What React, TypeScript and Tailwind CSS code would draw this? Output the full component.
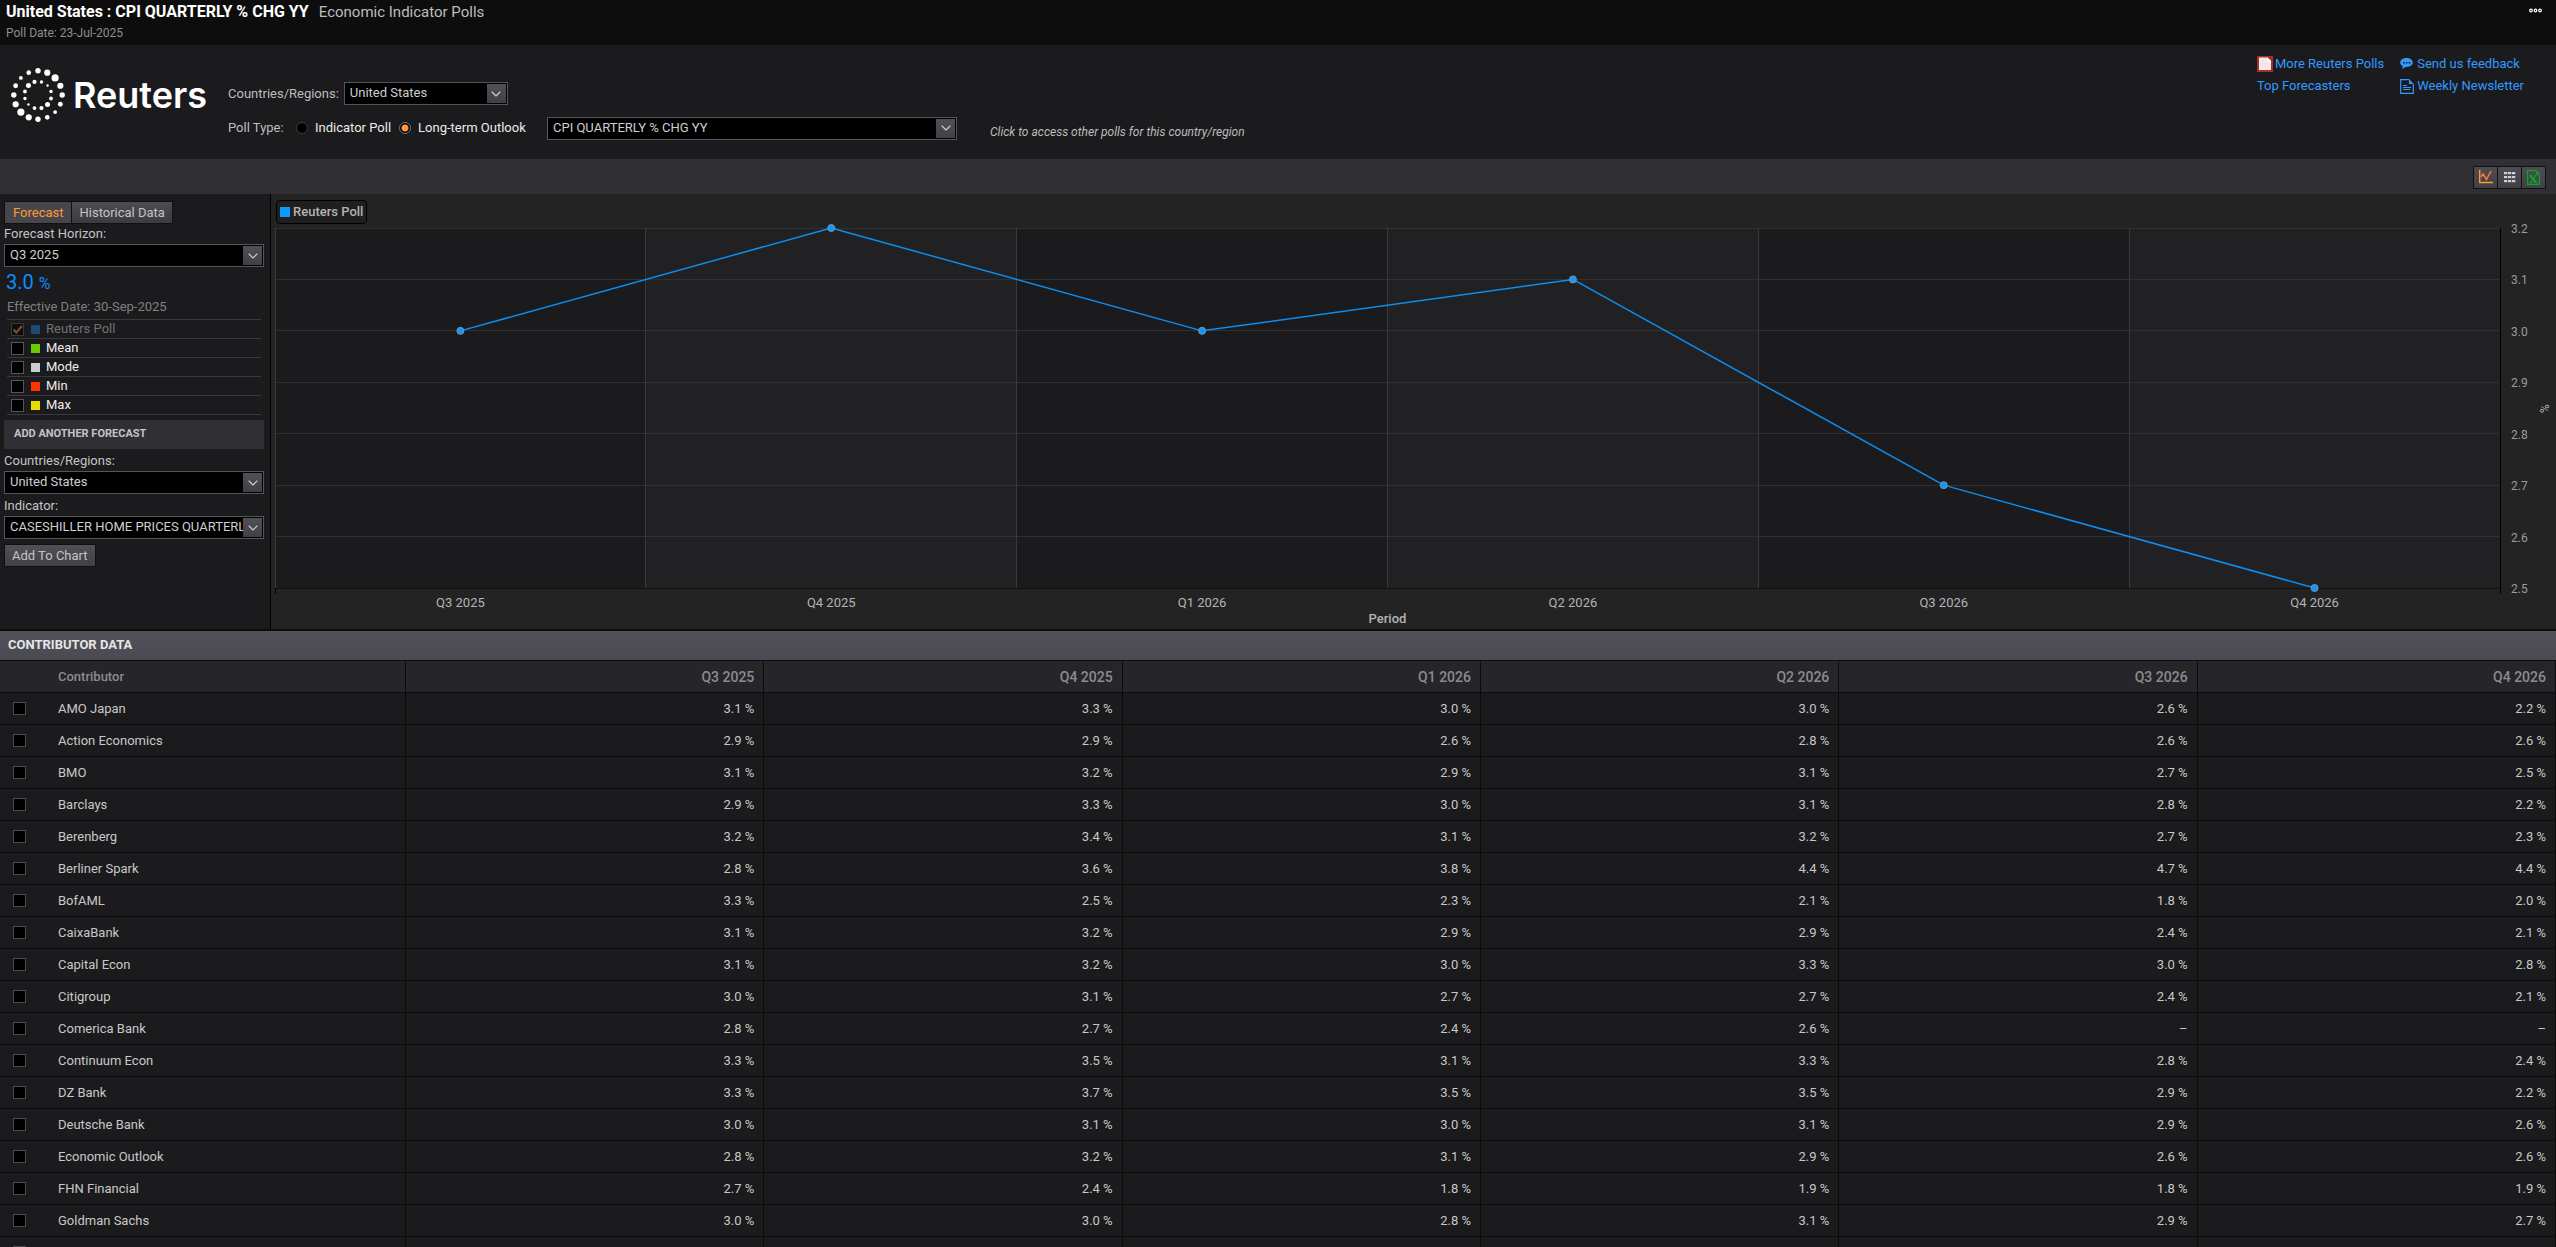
import React from "react";
import {ChevronDown} from "lucide-react";

const periods = ["Q3 2025", "Q4 2025", "Q1 2026", "Q2 2026", "Q3 2026", "Q4 2026"];
const pollValues = [3.0, 3.2, 3.0, 3.1, 2.7, 2.5];
const ticks = [3.2, 3.1, 3.0, 2.9, 2.8, 2.7, 2.6, 2.5];

const contributors: [string, string[]][] = [
    ["AMO Japan", ["3.1", "3.3", "3.0", "3.0", "2.6", "2.2"]],
    ["Action Economics", ["2.9", "2.9", "2.6", "2.8", "2.6", "2.6"]],
    ["BMO", ["3.1", "3.2", "2.9", "3.1", "2.7", "2.5"]],
    ["Barclays", ["2.9", "3.3", "3.0", "3.1", "2.8", "2.2"]],
    ["Berenberg", ["3.2", "3.4", "3.1", "3.2", "2.7", "2.3"]],
    ["Berliner Spark", ["2.8", "3.6", "3.8", "4.4", "4.7", "4.4"]],
    ["BofAML", ["3.3", "2.5", "2.3", "2.1", "1.8", "2.0"]],
    ["CaixaBank", ["3.1", "3.2", "2.9", "2.9", "2.4", "2.1"]],
    ["Capital Econ", ["3.1", "3.2", "3.0", "3.3", "3.0", "2.8"]],
    ["Citigroup", ["3.0", "3.1", "2.7", "2.7", "2.4", "2.1"]],
    ["Comerica Bank", ["2.8", "2.7", "2.4", "2.6", "", ""]],
    ["Continuum Econ", ["3.3", "3.5", "3.1", "3.3", "2.8", "2.4"]],
    ["DZ Bank", ["3.3", "3.7", "3.5", "3.5", "2.9", "2.2"]],
    ["Deutsche Bank", ["3.0", "3.1", "3.0", "3.1", "2.9", "2.6"]],
    ["Economic Outlook", ["2.8", "3.2", "3.1", "2.9", "2.6", "2.6"]],
    ["FHN Financial", ["2.7", "2.4", "1.8", "1.9", "1.8", "1.9"]],
    ["Goldman Sachs", ["3.0", "3.0", "2.8", "3.1", "2.9", "2.7"]],
];

const series = [
    {name: "Mean", color: "bg-[#66cc00]"},
    {name: "Mode", color: "bg-[#cccccc]"},
    {name: "Min", color: "bg-[#ff3300]"},
    {name: "Max", color: "bg-[#e6dc00]"},
];

// radius of every dot, clockwise from twelve o'clock
const outerDots = [2.7, 3.1, 3.6, 3.1, 2.7, 2.4, 1.9, 2.3, 2.7, 3.1, 3.6, 3.1, 2.7, 2.4, 1.9, 2.3];
const innerDots = [1.7, 1.2, 1.7, 1.9, 2.5, 2.1, 1.9, 1.2, 1.7, 1.9, 2.5, 2.1];

function ReutersLogo() {
    return (
        <div className="flex items-center gap-[7px]">
            <svg width="56" height="56" viewBox="-28 -28 56 56" fill="#fff" aria-hidden="true">
                {outerDots.map((r, i) => {
                    const a = i * Math.PI / 8;
                    return <circle key={i} cx={24.2 * Math.sin(a)} cy={-24.2 * Math.cos(a)} r={r}/>;
                })}
                {innerDots.map((r, i) => {
                    const a = (i + 0.5) * Math.PI / 6;
                    return <circle key={i} cx={13.5 * Math.sin(a)} cy={-13.5 * Math.cos(a)} r={r}/>;
                })}
            </svg>
            <span className="font-[Inter] font-semibold text-[36px] leading-10 text-white">Reuters</span>
        </div>
    );
}

function Select({id, value, className}: {id: string, value: string, className: string}) {
    return (
        <div className={"relative " + className}>
            <select id={id} className="appearance-none block w-full h-[23px] bg-black border border-[#56555c] pl-[5px] pr-5 pb-0.5 text-[13px] leading-5 text-[#cfcfcf]">
                <option>{value}</option>
            </select>
            <span className="absolute top-0.5 right-0.5 w-[19px] h-[19px] bg-linear-to-b from-[#515056] to-[#414045] flex items-center justify-center pointer-events-none">
                <ChevronDown className="w-4 h-4 text-[#cfcfd6]" strokeWidth={1.6}/>
            </span>
        </div>
    );
}

function TitleBar() {
    return (
        <header className="h-[45px] shrink-0 bg-[#0d0d0d] pl-1.5 pr-3.5 flex justify-between">
            <div>
                <h1 className="flex gap-2.5 text-base leading-6">
                    <span className="font-bold text-white">United States : CPI QUARTERLY % CHG YY</span>
                    <span className="text-[15px] text-[#bdbdbd]">Economic Indicator Polls</span>
                </h1>
                <p className="text-xs leading-[18px] text-[#8f8f8f]">Poll Date: 23-Jul-2025</p>
            </div>
            <button aria-label="More" className="h-5 flex items-center">
                <svg width="13" height="5" viewBox="0 0 13 5" fill="none" stroke="#fff" strokeWidth="1.2">
                    <circle cx="2" cy="2.5" r="1.3"/>
                    <circle cx="6.5" cy="2.5" r="1.3"/>
                    <circle cx="11" cy="2.5" r="1.3"/>
                </svg>
            </button>
        </header>
    );
}

function PollType({id, label, checked}: {id: string, label: string, checked?: boolean}) {
    return (
        <label htmlFor={id} className="flex items-center gap-[7px] text-[#ececec]">
            <input
                id={id}
                type="radio"
                name="pollType"
                defaultChecked={checked}
                className="appearance-none w-3 h-3 rounded-full bg-black border border-[#3a393f] checked:border-[#77767c] checked:bg-[radial-gradient(circle,#ff9933_0_3px,#000_4px)]"
            />
            {label}
        </label>
    );
}

function PollHeader() {
    return (
        <section className="h-[114px] shrink-0 bg-[#1b1b1d] pl-2.5 pr-8 flex">
            <div className="w-[218px] pt-[22px] shrink-0">
                <ReutersLogo/>
            </div>
            <div className="pt-[37px] flex flex-col gap-[11px] text-[13px] leading-4 text-[#bdbdbd]">
                <div className="flex items-center gap-[5px]">
                    <label htmlFor="country">Countries/Regions:</label>
                    <Select id="country" value="United States" className="w-[164px]"/>
                </div>
                <div className="flex items-center">
                    <span className="w-[68px]">Poll Type:</span>
                    <div className="flex gap-2 w-[251px]">
                        <PollType id="indicatorPoll" label="Indicator Poll"/>
                        <PollType id="longTerm" label="Long-term Outlook" checked/>
                    </div>
                    <Select id="poll" value="CPI QUARTERLY % CHG YY" className="w-[410px]"/>
                    <label htmlFor="poll" className="ml-[33px] pt-2 italic text-xs">Click to access other polls for this country/region</label>
                </div>
            </div>
            <nav className="ml-auto pt-2 flex gap-4 text-[13px] leading-[22px] text-[#3399ff]">
                <div>
                    <a href="#polls" className="flex items-center gap-0.5">
                        <svg width="16" height="16" viewBox="0 0 16 16" aria-hidden="true">
                            <rect width="16" height="16" fill="#a5302a"/>
                            <path d="M2 1.5h8.5L14 5v9H2z" fill="#f4e6e6"/>
                            <path d="M10.5 1.5 14 5v2.5L9 5z" fill="#fff"/>
                        </svg>
                        More Reuters Polls
                    </a>
                    <a href="#forecasters" className="block">Top Forecasters</a>
                </div>
                <div>
                    <a href="#feedback" className="flex items-center gap-[3px]">
                        <svg width="14" height="12" viewBox="0 0 14 12" aria-hidden="true">
                            <path d="M6.5 0C3 0 .2 1.9.2 4.5c0 1.6 1 2.9 2.6 3.7L2 11l3.8-2.1c3.8.2 7-1.5 7-4.4C12.8 1.9 10 0 6.5 0z" fill="#3399ff"/>
                            <path d="M3 4h1.6v1.6H3zM5.8 4h1.6v1.6H5.8zM8.6 4h1.6v1.6H8.6z" fill="#1b1b1d"/>
                        </svg>
                        Send us feedback
                    </a>
                    <a href="#newsletter" className="flex items-center gap-[3px]">
                        <svg width="14" height="15" viewBox="0 0 14 15" fill="none" stroke="#3399ff" aria-hidden="true">
                            <path d="M9 .7H.7v13.6h12.6V5" strokeWidth="1.2"/>
                            <path d="M9 0v5h4.7z" fill="#3399ff" stroke="none"/>
                            <path d="M3 6.5h4M3 8.5h8M3 10.500h7"/>
                        </svg>
                        Weekly Newsletter
                    </a>
                </div>
            </nav>
        </section>
    );
}

function Toolbar() {
    const button = "w-[25px] h-[23px] -ml-px border border-[#111] bg-linear-to-b from-[#4d4c52] to-[#414045] flex items-center justify-center";
    return (
        <div className="h-[35px] shrink-0 bg-[#302f34] pt-px pr-2.5 flex items-center justify-end">
            <button className={button} aria-label="Chart">
                <svg width="14" height="14" viewBox="0 0 14 14" fill="none">
                    <path d="M.7 0v12.5H14" stroke="#ff9933" strokeWidth="1.4"/>
                    <path d="M2 7 4 4l3.500 5.500L12 1" stroke="#ff7733" strokeWidth="1.6"/>
                </svg>
            </button>
            <button className={button} aria-label="Table">
                <svg width="12" height="11" viewBox="0 0 12 11" fill="#d0d0d0">
                    {[0, 4, 8].map(y => [0, 4, 8].map(x => <rect key={x + "-" + y} x={x} y={y} width="3.3" height="2.2"/>))}
                </svg>
            </button>
            <button className={button} aria-label="Export to Excel">
                <svg width="13" height="15" viewBox="0 0 13 15" fill="none" stroke="#0fa32c">
                    <path d="M9 .6H.6v13.8h11.8V4" strokeWidth="1.2"/>
                    <path d="M9 0v4h4z" fill="#0fa32c" stroke="none"/>
                    <path d="m3.5 5.5 5.5 7" strokeWidth="2.6"/>
                    <path d="m9.3 5.5-5.8 7M2.2 5.3h3M7.5 5.3h3M2.2 12.5h3M7.5 12.5h3" strokeWidth="1.1"/>
                </svg>
            </button>
        </div>
    );
}

function Sidebar() {
    const box = "appearance-none w-[13px] h-[13px] bg-black border border-[#56555c]";
    return (
        <aside className="w-[271px] shrink-0 bg-[#1b1b1d] border-r border-black pl-1 pr-1.5 pt-[7px] text-[13px] text-[#c4c4c4]">
            <div className="flex">
                <button className="h-[23px] px-2 border border-[#111] bg-[#47464d] text-[#ff9933]">Forecast</button>
                <button className="h-[23px] px-[7px] -ml-px border border-[#111] bg-linear-to-b from-[#4d4c52] to-[#3c3b40]">Historical Data</button>
            </div>
            <label htmlFor="horizon" className="block leading-5">Forecast Horizon:</label>
            <Select id="horizon" value="Q3 2025" className="w-full"/>
            <p className="pl-0.5 text-xl leading-[30px] text-[#0d8dff]">3.0 <span className="text-base">%</span></p>
            <p className="pl-[3px] pb-0.5 leading-5 text-[#808080]">Effective Date: 30-Sep-2025</p>
            <ul className="ml-[3px] mr-[3px] border-t border-[#39383d]">
                <li className="h-[19px] pl-1 flex items-center border-b border-[#39383d]">
                    <label className="flex items-center opacity-50">
                        <span className="relative flex">
                            <input type="checkbox" defaultChecked disabled className={box}/>
                            <svg className="absolute inset-0" width="13" height="13" viewBox="0 0 13 13" fill="none" stroke="#dd8844" strokeWidth="2">
                                <path d="m2.5 6.5 2.8 3L11 3"/>
                            </svg>
                        </span>
                        <span className="w-[9px] h-[9px] bg-[#2277cc] ml-[7px] mr-1.5"/>
                        Reuters Poll
                    </label>
                </li>
                {series.map(s => (
                    <li key={s.name} className="h-[19px] pl-1 flex items-center border-b border-[#39383d]">
                        <label className="flex items-center text-[#ececec]">
                            <input type="checkbox" className={box}/>
                            <span className={"w-[9px] h-[9px] ml-[7px] mr-1.5 " + s.color}/>
                            {s.name}
                        </label>
                    </li>
                ))}
            </ul>
            <h2 className="mt-[5px] h-[29px] pl-2.5 bg-[#302f34] font-bold text-[11px] leading-7">ADD ANOTHER FORECAST</h2>
            <label htmlFor="addCountry" className="block pt-0.5 leading-5">Countries/Regions:</label>
            <Select id="addCountry" value="United States" className="w-full"/>
            <label htmlFor="addIndicator" className="block pt-0.5 leading-5">Indicator:</label>
            <Select id="addIndicator" value="CASESHILLER HOME PRICES QUARTERLY" className="w-full"/>
            <button className="mt-[5px] h-[23px] px-[7px] border border-[#111] bg-linear-to-b from-[#515056] to-[#414045]">Add To Chart</button>
        </aside>
    );
}

function Chart() {
    const height = 360;
    const x = (i: number) => `${(i + 0.5) / periods.length * 100}%`;
    const y = (v: number) => (3.2 - v) / 0.7 * height;

    return (
        <div className="grow bg-[#232323] pt-1.5 pl-1 pr-14">
            <div className="w-fit flex items-center gap-[3px] h-6 ml-px px-[3px] mb-1 border border-black rounded-sm bg-[#1f1f20] text-[13px] font-medium text-[#b4b4b4]">
                <span className="w-2.5 h-2.5 bg-[#0d99ff]"/>
                Reuters Poll
            </div>
            <svg className="block w-full h-[400px] overflow-visible text-[13px]" fill="#9c9c9c">
                {periods.map((p, i) => (
                    <rect key={p} x={`${i / 6 * 100}%`} y="0" width={`${100 / 6}%`} height={height} fill={i % 2 ? "#212123" : "#1b1b1d"}/>
                ))}
                {ticks.map(t => (
                    <g key={t}>
                        <line x1="0" x2="100%" y1={y(t)} y2={y(t)} stroke={t === 2.5 ? "#111" : "#303032"} shapeRendering="crispEdges"/>
                        <svg x="100%" y={y(t)} className="overflow-visible text-xs">
                            <text x="11" y="5">{t.toFixed(1)}</text>
                        </svg>
                    </g>
                ))}
                {[0, 1, 2, 3, 4, 5].map(i => (
                    <line key={i} x1={`${i / 6 * 100}%`} x2={`${i / 6 * 100}%`} y1="0" y2={height} stroke="#3a3a3c" shapeRendering="crispEdges"/>
                ))}
                <line x1="0" x2="0" y1={height} y2={height + 6} stroke="#000" shapeRendering="crispEdges"/>
                <line x1="100%" x2="100%" y1="0" y2={height + 6} stroke="#000" shapeRendering="crispEdges"/>
                {pollValues.slice(1).map((v, i) => (
                    <line key={i} x1={x(i)} y1={y(pollValues[i])} x2={x(i + 1)} y2={y(v)} stroke="#0d8dee" strokeWidth="1.5"/>
                ))}
                {pollValues.map((v, i) => (
                    <circle key={i} cx={x(i)} cy={y(v)} r="3.5" fill="#0d99ff" stroke="#7f93a8"/>
                ))}
                {periods.map((p, i) => (
                    <text key={p} x={x(i)} y={height + 19} textAnchor="middle" fill="#b4b4b4">{p}</text>
                ))}
                <text x="50%" y={height + 35} textAnchor="middle" fill="#b4b4b4" className="font-medium">Period</text>
                <svg x="100%" y={height / 2} className="overflow-visible">
                    <text transform="translate(49 5) rotate(-90)" fill="#b4b4b4" className="text-xs">%</text>
                </svg>
            </svg>
        </div>
    );
}

function ContributorTable() {
    return (
        <section className="text-[13px]">
            <h2 className="h-[29px] pl-2 bg-linear-to-b from-[#505157] to-[#4b4a54] font-bold leading-7 text-[#e6e6e6]">CONTRIBUTOR DATA</h2>
            <table className="w-full table-fixed border-separate border-spacing-0 border-t border-[#0b0b0c]">
                <thead>
                    <tr className="h-8 bg-[#26262a] text-[#8c8c8c]">
                        <th className="w-[46px] border-b border-[#0b0b0c]"/>
                        <th className="w-[360px] pl-3 text-left font-medium border-b border-r border-[#0b0b0c]">Contributor</th>
                        {periods.map(p => (
                            <th key={p} className="pr-[9px] text-right text-sm font-medium border-b border-r border-[#0b0b0c]">{p}</th>
                        ))}
                    </tr>
                </thead>
                <tbody>
                    {[...contributors, ["", []] as [string, string[]]].map(([name, values]) => (
                        <tr key={name} className="h-8 bg-[#1b1b1d] text-[#c8c8c8]">
                            <td className="pl-[13px] border-b border-[#0b0b0c]">
                                <input type="checkbox" aria-label={name} className="appearance-none block w-[13px] h-[13px] bg-black border border-[#4a494f]"/>
                            </td>
                            <td className="pl-3 border-b border-r border-[#0b0b0c]">{name}</td>
                            {periods.map((p, i) => (
                                <td key={p} className="pr-[9px] text-right border-b border-r border-[#0b0b0c]">
                                    {name && (values[i] ? values[i] + " %" : "–")}
                                </td>
                            ))}
                        </tr>
                    ))}
                </tbody>
            </table>
        </section>
    );
}

export default function App() {
    return (
        <div className="h-screen overflow-hidden flex flex-col bg-[#1b1b1d] font-['Roboto','Liberation_Sans',sans-serif]">
            <TitleBar/>
            <PollHeader/>
            <Toolbar/>
            <main className="grow">
                <div className="h-[437px] flex border-b-2 border-[#0b0b0c]">
                    <Sidebar/>
                    <Chart/>
                </div>
                <ContributorTable/>
            </main>
        </div>
    );
}
